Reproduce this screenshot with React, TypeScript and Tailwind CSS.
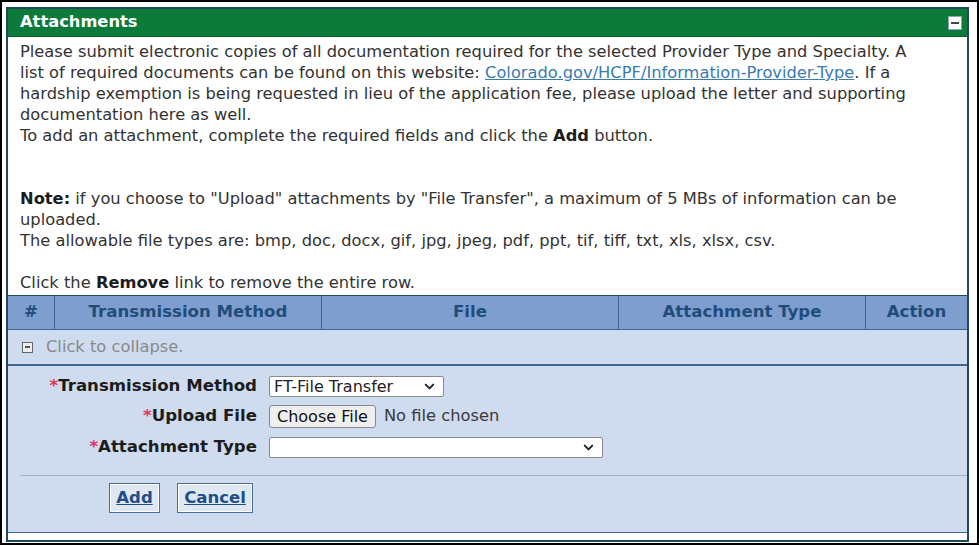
import { ChevronDown } from "lucide-react"

const cols = [
  { label: "#", w: "w-[47px]" },
  { label: "Transmission Method", w: "w-[267px]" },
  { label: "File", w: "w-[297px]" },
  { label: "Attachment Type", w: "w-[247px]" },
  { label: "Action", w: "flex-1" },
]

function Label({ text }: { text: string }) {
  return (
    <div className="w-[261px] text-right font-bold text-[#1c1c1c] pr-[12px] text-[16.6px] whitespace-nowrap">
      <span className="text-[#e0335f]">*</span>
      {text}
    </div>
  )
}

function FakeSelect({ value, w }: { value: string; w: string }) {
  return (
    <div className={`${w} h-[21px] bg-white border border-[#8a8a8a] rounded-[2px] flex items-center justify-between pl-[4px] pr-[6px] text-[16px] text-[#222]`}>
      <span className="leading-none">{value}</span>
      <ChevronDown className="w-[15px] h-[15px] text-[#222]" strokeWidth={3.2} />
    </div>
  )
}

function FormButton({ text, w }: { text: string; w: string }) {
  return (
    <div className={`${w} h-[30px] border border-[#4c6f8f] p-[1px] bg-white`}>
      <div className="h-full w-full bg-[#dfe7f3] flex items-center justify-center font-bold underline text-[#1e4f8a] text-[16.5px]">
        {text}
      </div>
    </div>
  )
}

export default function App() {
  return (
    <div className="w-[979px] h-[545px] border-2 border-black bg-white pl-[4px] pt-[5px] pr-[8px] pb-[1px] font-['DejaVu_Sans',Verdana,sans-serif] text-[16.3px] overflow-hidden">
      <div className="h-full border-2 border-[#1f4a58] flex flex-col">
        {/* header */}
        <div className="h-[28px] bg-[#0b7a3b] flex items-center justify-between pl-[12px] pr-[5px] border-b border-[#0a5a2e]">
          <span className="font-bold text-white text-[16.3px]">Attachments</span>
          <div className="w-[14px] h-[14px] bg-white border border-[#8aa] flex items-center justify-center">
            <div className="w-[8px] h-[2px] bg-[#445]" />
          </div>
        </div>

        {/* instructions */}
        <div className="h-[259px] px-[12px] pt-[4px] text-[#333] leading-[21px] border-b border-[#1f4a58] whitespace-nowrap">
          <p>
            Please submit electronic copies of all documentation required for the selected Provider Type and Specialty. A
            <br />
            list of required documents can be found on this website:{" "}
            <span className="text-[#3a7bb0] underline">Colorado.gov/HCPF/Information-Provider-Type</span>. If a
            <br />
            hardship exemption is being requested in lieu of the application fee, please upload the letter and supporting
            <br />
            documentation here as well.
          </p>
          <p>
            To add an attachment, complete the required fields and click the <b className="text-[#1c1c1c]">Add</b> button.
          </p>
          <div className="h-[42px]" />
          <p>
            <b className="text-[#1c1c1c]">Note:</b> if you choose to "Upload" attachments by "File Transfer", a maximum of 5 MBs
            of information can be
            <br />
            uploaded.
          </p>
          <p>The allowable file types are: bmp, doc, docx, gif, jpg, jpeg, pdf, ppt, tif, tiff, txt, xls, xlsx, csv.</p>
          <div className="h-[21px]" />
          <p>
            Click the <b className="text-[#1c1c1c]">Remove</b> link to remove the entire row.
          </p>
        </div>

        {/* table header */}
        <div className="h-[34px] bg-[#7f9ed0] flex border-b border-[#3f6590]">
          {cols.map((c, i) => (
            <div
              key={c.label}
              className={`${c.w} flex items-center justify-center font-bold text-[#1f4d7a] text-[16.6px] ${i < cols.length - 1 ? "border-r border-[#3f6590]" : ""}`}
            >
              {c.label}
            </div>
          ))}
        </div>

        {/* collapse row */}
        <div className="h-[36px] bg-[#cfdbee] flex items-center pl-[14px] gap-[13px] border-b-2 border-[#3f6590]">
          <div className="w-[11px] h-[11px] border border-[#666] bg-[#eee] flex items-center justify-center">
            <div className="w-[5px] h-[1.5px] bg-[#555]" />
          </div>
          <span className="text-[#8a8a8a]">Click to collapse.</span>
        </div>

        {/* form */}
        <div className="h-[167px] bg-[#cfdbee] border-b border-[#3f6590] pt-[10px]">
          <div className="flex flex-col gap-[8px]">
            <div className="flex items-center h-[21px]">
              <Label text="Transmission Method" />
              <FakeSelect value="FT-File Transfer" w="w-[175px]" />
            </div>
            <div className="flex items-center h-[23px]">
              <Label text="Upload File" />
              <div className="h-[23px] px-[7px] bg-[#efefef] border border-[#8a8a8a] rounded-[3px] flex items-center text-[16px] text-[#111]">
                Choose File
              </div>
              <span className="ml-[8px] text-[#3a3a3a]">No file chosen</span>
            </div>
            <div className="flex items-center h-[22px]">
              <Label text="Attachment Type" />
              <FakeSelect value="" w="w-[334px]" />
            </div>
          </div>
          <div className="ml-[12px] mt-[17px] border-t border-[#9fb0c8]" />
          <div className="flex gap-[17px] pl-[101px] pt-[7px]">
            <FormButton text="Add" w="w-[51px]" />
            <FormButton text="Cancel" w="w-[76px]" />
          </div>
        </div>

        <div className="flex-1 bg-white" />
      </div>
    </div>
  )
}
